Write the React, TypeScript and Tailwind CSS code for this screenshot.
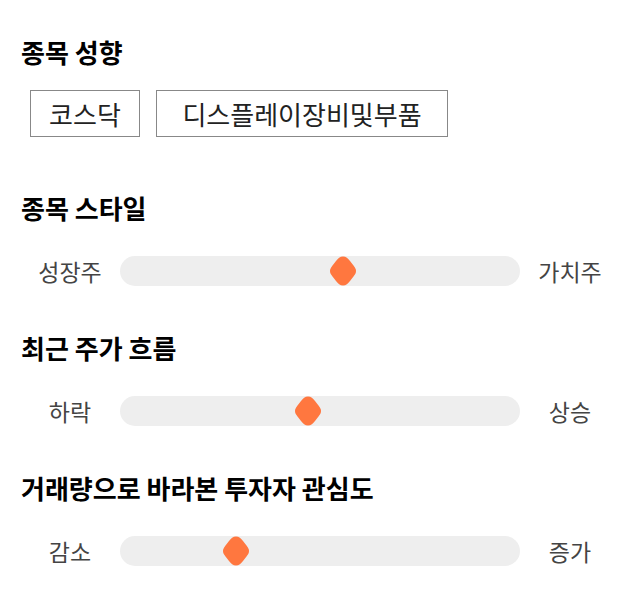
import React from "react";

const font = { fontFamily: '"Noto Sans CJK KR", "Noto Sans", sans-serif' };

interface SliderRowProps {
  left: string;
  right: string;
  value: number;
  className?: string;
}

const Thumb = () => (
  <svg width="26" height="30" viewBox="0 0 26 30">
    <path
      d="M13 0.5 C16 0.5 18 2.5 20 5 L23.5 9.5 C25.5 12 26 13.5 26 15 C26 16.5 25.5 18 23.5 20.5 L20 25 C18 27.5 16 29.5 13 29.5 C10 29.5 8 27.5 6 25 L2.5 20.5 C0.5 18 0 16.5 0 15 C0 13.5 0.5 12 2.5 9.5 L6 5 C8 2.5 10 0.5 13 0.5 Z"
      fill="#ff773f"
    />
  </svg>
);

const SliderRow: React.FC<SliderRowProps> = ({ left, right, value, className }) => (
  <div className={`flex items-center h-[30px] px-5 ${className ?? ""}`}>
    <span className="w-[100px] text-center text-[23px] text-[#444]">{left}</span>
    <div className="relative w-[400px] h-[30px] rounded-full bg-[#eeeeee]">
      <div
        className="absolute top-0 -translate-x-1/2"
        style={{ left: `${value}%` }}
      >
        <Thumb />
      </div>
    </div>
    <span className="w-[100px] text-center text-[23px] text-[#444]">{right}</span>
  </div>
);

const Heading = ({ children, className }: { children: React.ReactNode; className?: string }) => (
  <h2 className={`px-[21px] h-8 leading-8 text-[26px] font-bold text-black ${className ?? ""}`}>
    {children}
  </h2>
);

export default function App() {
  return (
    <div className="w-[640px] h-[606px] bg-white pt-9" style={font}>
      <Heading>종목 성향</Heading>
      <div className="flex gap-4 px-[30px] mt-[22px]">
        <span className="w-[110px] h-[47px] flex items-center justify-center border border-[#888] text-[26px] text-[#222]">
          코스닥
        </span>
        <span className="w-[292px] h-[47px] flex items-center justify-center border border-[#888] text-[26px] text-[#222]">
          디스플레이장비및부품
        </span>
      </div>

      <Heading className="mt-[55px]">종목 스타일</Heading>
      <SliderRow left="성장주" right="가치주" value={55.75} className="mt-8" />

      <Heading className="mt-[46px]">최근 주가 흐름</Heading>
      <SliderRow left="하락" right="상승" value={47} className="mt-8" />

      <Heading className="mt-[46px]">거래량으로 바라본 투자자 관심도</Heading>
      <SliderRow left="감소" right="증가" value={29} className="mt-8" />
    </div>
  );
}
